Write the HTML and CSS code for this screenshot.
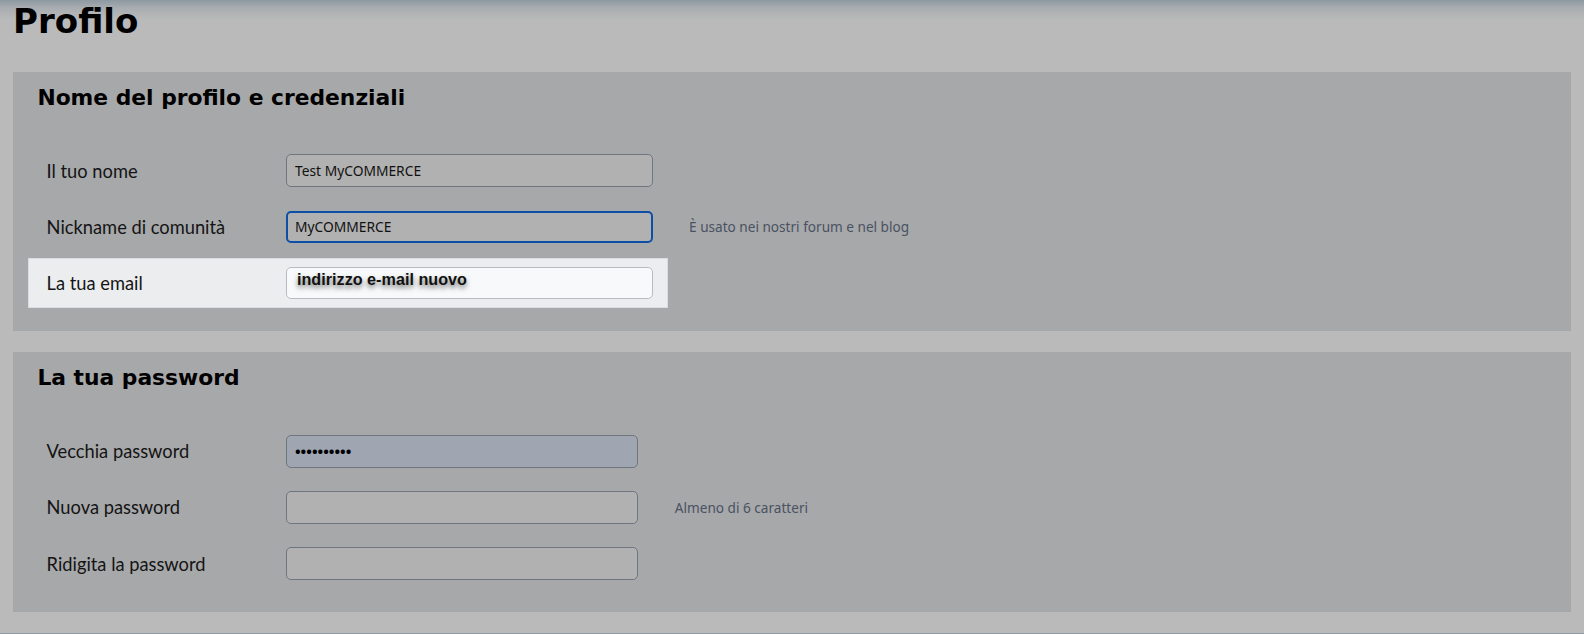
FILE: index.html
```html
<!DOCTYPE html>
<html lang="it">
<head>
<meta charset="utf-8">
<title>Profilo</title>
<link rel="stylesheet" href="styles.css">
</head>
<body>
<h1 class="page-title">Profilo</h1>

<section class="card">
  <h2 class="card-title">Nome del profilo e credenziali</h2>
  <div class="rows">
    <div class="row">
      <label class="label">Il tuo nome</label>
      <div class="input wide">Test MyCOMMERCE</div>
    </div>
    <div class="row">
      <label class="label">Nickname di comunità</label>
      <div class="input wide focus">MyCOMMERCE</div>
      <span class="hint">È usato nei nostri forum e nel blog</span>
    </div>
    <div class="row highlight">
      <label class="label">La tua email</label>
      <div class="input wide light"><span class="email-text">indirizzo e-mail nuovo</span></div>
    </div>
  </div>
</section>

<section class="card">
  <h2 class="card-title">La tua password</h2>
  <div class="rows">
    <div class="row">
      <label class="label">Vecchia password</label>
      <div class="input narrow autofill"><span class="dots">••••••••••</span></div>
    </div>
    <div class="row">
      <label class="label">Nuova password</label>
      <div class="input narrow"></div>
      <span class="hint">Almeno di 6 caratteri</span>
    </div>
    <div class="row">
      <label class="label">Ridigita la password</label>
      <div class="input narrow"></div>
    </div>
  </div>
</section>
</body>
</html>
```
FILE: styles.css
```css
html, body {
  margin: 0;
  padding: 0;
}
body {
  background: linear-gradient(to bottom, #8d98a1 0px, #a9adb1 8px, #bababa 20px, #bababa 100%);
  background-color: #bababa;
  padding: 0 13.3px 0 13.1px;
  font-family: "Lato", "Liberation Sans", sans-serif;
  color: #111;
}
.page-title {
  margin: 0;
  padding-top: 1px;
  height: 70.7px;
  font-family: "DejaVu Sans", sans-serif;
  font-weight: bold;
  font-size: 34px;
  line-height: 40px;
  color: #000;
}
.card {
  background: #a7a8aa;
  padding: 13px 0 23.2px 0;
  margin-bottom: 21.2px;
}
.card-title {
  margin: 0 0 34.7px 24.3px;
  font-family: "DejaVu Sans", sans-serif;
  font-weight: bold;
  font-size: 21.8px;
  line-height: 26px;
  color: #000;
}
.rows {
  display: flex;
  flex-direction: column;
  gap: 5.6px;
}
.row {
  display: flex;
  align-items: center;
  height: 50.5px;
  box-sizing: border-box;
  margin-left: 15.2px;
  padding-left: 18.3px;
  width: 639.4px;
}
.row.highlight {
  background: #ecedef;
  border: 1px solid #d9dce0;
  padding-left: 17.3px;
}
.label {
  width: 239.4px;
  flex: none;
  font-size: 18.3px;
  color: #141414;
}
.input {
  flex: none;
  height: 32.4px;
  box-sizing: border-box;
  border: 1px solid #6f7680;
  border-radius: 5px;
  background: #b1b1b1;
  font-family: "Noto Sans", sans-serif;
  font-size: 13.8px;
  color: #111;
  padding-left: 8px;
  display: flex;
  align-items: center;
}
.input.wide { width: 366.7px; }
.input.narrow { width: 352.5px; }
.input.focus {
  border: 2px solid #0e4fa6;
  padding-left: 7px;
}
.input.light {
  background: #f8f9fa;
  border-color: #b8bcc2;
}
.input.autofill {
  background: #9fa6b2;
}
.email-text {
  font-family: "Liberation Sans", Arial, sans-serif;
  font-weight: bold;
  font-size: 16.2px;
  color: #111;
  text-shadow: 0 3px 5px rgba(0,0,0,0.55);
  margin-left: 2px;
  margin-top: -6px;
}
.dots {
  font-size: 15px;
  font-weight: bold;
  color: #000;
}
.hint {
  flex: none;
  margin-left: 36.4px;
  font-family: "Noto Sans", sans-serif;
  font-size: 13.6px;
  color: #4a5262;
  white-space: nowrap;
}
```
